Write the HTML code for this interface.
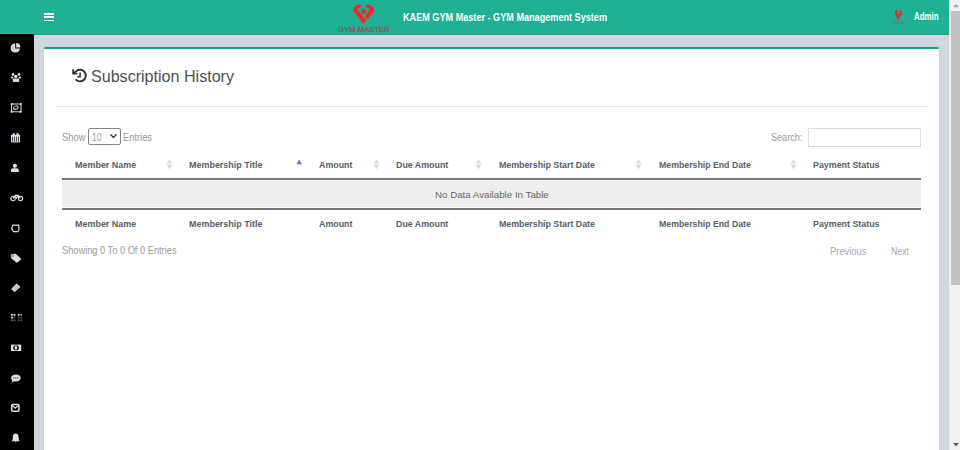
<!DOCTYPE html>
<html><head><meta charset="utf-8"><title>Subscription History</title>
<style>
html,body{margin:0;padding:0;}
body{width:960px;height:450px;overflow:hidden;position:relative;background:#d2d6de;font-family:"Liberation Sans",sans-serif;}
.ab{position:absolute;display:block}
.ic{position:absolute;display:block}
.t{position:absolute;white-space:nowrap;line-height:normal;transform-origin:0 0;font-family:"Liberation Sans",sans-serif}
#hdr{position:absolute;left:0;top:0;width:949px;height:34px;background:#1fb096}
#side{position:absolute;left:0;top:34px;width:34px;height:416px;background:#000}
#card{position:absolute;left:44px;top:47.4px;width:895px;height:420px;background:#fff;border-top:2.4px solid #0ca688;border-radius:2px;box-shadow:0 0 1.5px rgba(0,0,30,.18)}
#sb{position:absolute;left:949px;top:0;width:11px;height:450px;background:#f1f1f1;border-left:1px solid #e8e8e8;box-sizing:border-box}
#thumb{position:absolute;left:951px;top:11px;width:9px;height:274px;background:#c1c1c1}
</style></head><body>
<div id="hdr"></div>
<div id="side"></div>
<div class="ab" style="left:0;top:33px;width:34px;height:1px;background:#22c0a0"></div>
<div class="ab" style="left:34px;top:34px;width:915px;height:1px;background:#0ea688"></div>
<div id="card"></div>
<div id="sb"></div>
<div id="thumb"></div>
<svg class="ab" style="left:953px;top:4px" width="6" height="4" viewBox="0 0 6 4"><path d="M0 3.2 L3 0 L6 3.2Z" fill="#a3a3a3"/></svg>
<svg class="ab" style="left:953px;top:443px" width="6" height="4" viewBox="0 0 6 4"><path d="M0 0 L6 0 L3 3.2Z" fill="#505050"/></svg>
<!-- hamburger -->
<div class="ab" style="left:44px;top:13.3px;width:10px;height:1.7px;background:#fff"></div>
<div class="ab" style="left:44px;top:16.4px;width:10px;height:1.7px;background:#fff"></div>
<div class="ab" style="left:44px;top:19.5px;width:10px;height:1.7px;background:#fff"></div>
<svg class="ab" style="left:330px;top:0px" width="70" height="34" viewBox="0 0 70 34">
<path d="M29.6 4.4 C26 4.4 22.6 7.5 23.2 11.1 L33.3 23.9 L36.8 20.4 L27.6 10.2 Q27.6 8 29.6 7.8 Q31.8 7.6 31.6 5.8 Q31.2 4.4 29.6 4.4 Z" fill="#ef2a2a"/>
<path d="M37 4.4 C41 4.4 45 7.5 44.3 11.1 L37.6 19.6 L34.9 16.4 L39.4 9.6 Q39.4 7.6 37.2 7.5 Q35.4 7.3 35.5 5.9 Q35.8 4.4 37 4.4 Z" fill="#ef2a2a"/>
<circle cx="33.6" cy="11.6" r="2.6" fill="#ef2a2a"/>
<text x="8.2" y="31.8" font-family="Liberation Sans" font-size="7.8" font-weight="400" fill="#a24f5a" stroke="#a24f5a" stroke-width="0.35" textLength="51.6" lengthAdjust="spacingAndGlyphs">GYM MASTER</text>
</svg>
<svg class="ab" style="left:880px;top:0px" width="30" height="30" viewBox="0 0 30 30">
<g transform="translate(7.5 7.74) scale(0.324 0.513)"><path d="M29.6 4.4 C26 4.4 22.6 7.5 23.2 11.1 L33.3 23.9 L36.8 20.4 L27.6 10.2 Q27.6 8 29.6 7.8 Q31.8 7.6 31.6 5.8 Q31.2 4.4 29.6 4.4 Z" fill="#ef2222"/><path d="M37 4.4 C41 4.4 45 7.5 44.3 11.1 L37.6 19.6 L34.9 16.4 L39.4 9.6 Q39.4 7.6 37.2 7.5 Q35.4 7.3 35.5 5.9 Q35.8 4.4 37 4.4 Z" fill="#ef2222"/><circle cx="33.6" cy="11.6" r="2.6" fill="#ef2222"/></g>
<text x="11.4" y="23.6" font-family="Liberation Sans" font-size="2.6" fill="#b84a55" opacity="0.8" textLength="13.6" lengthAdjust="spacingAndGlyphs">GYM MASTER</text>
</svg>
<svg class="ic" style="left:8px;top:40px" width="16" height="16" viewBox="0 0 16 16"><path d="M7.2 3.4 A4.6 4.6 0 1 0 11.9 8.6 L7.2 8.6 Z" fill="#d9e2e9"/><path d="M8.2 3 A4.4 4.4 0 0 1 12.4 7.4 L8.2 7.4 Z" fill="#d9e2e9"/><path d="M5 6 Q4.4 8.6 6.6 10.6" fill="none" stroke="#8a96a0" stroke-width="0.7"/></svg>
<svg class="ic" style="left:8px;top:70px" width="16" height="16" viewBox="0 0 16 16"><circle cx="5" cy="4.4" r="1.4" fill="#d9e2e9"/><circle cx="11" cy="4.4" r="1.4" fill="#d9e2e9"/><circle cx="7.8" cy="6.4" r="1.7" fill="#d9e2e9"/><rect x="3" y="6.4" width="2.4" height="2.2" rx="0.8" fill="#d9e2e9"/><rect x="10.6" y="6.4" width="2.4" height="2.2" rx="0.8" fill="#d9e2e9"/><rect x="4.8" y="8.5" width="6.4" height="3.6" rx="1" fill="#d9e2e9"/></svg>
<svg class="ic" style="left:8px;top:100px" width="16" height="16" viewBox="0 0 16 16"><rect x="3.6" y="4" width="9.4" height="7.8" fill="none" stroke="#d9e2e9" stroke-width="1"/><circle cx="3.7" cy="4.1" r="1.1" fill="#d9e2e9"/><circle cx="12.8" cy="4" r="1.1" fill="#d9e2e9"/><circle cx="3.6" cy="11.7" r="1.1" fill="#d9e2e9"/><circle cx="12.5" cy="11.8" r="1.1" fill="#d9e2e9"/><ellipse cx="7.8" cy="7.8" rx="3" ry="2.2" fill="#d9e2e9" opacity="0.8" transform="rotate(-25 7.8 7.8)"/><ellipse cx="7.6" cy="7.5" rx="1.8" ry="0.9" fill="#000"/></svg>
<svg class="ic" style="left:8px;top:130px" width="16" height="16" viewBox="0 0 16 16"><rect x="3" y="4.8" width="9.1" height="7.6" fill="#d9e2e9"/><rect x="4.6" y="3.2" width="2.2" height="2.2" fill="#d9e2e9"/><rect x="8.4" y="3.2" width="2.2" height="2.2" fill="#d9e2e9"/><rect x="4.0" y="6.6" width="0.9" height="5" fill="#3a3050"/><rect x="6.0" y="6.6" width="0.9" height="5" fill="#303a50"/><rect x="8.0" y="6.6" width="0.9" height="5" fill="#304a30"/><rect x="10.0" y="6.6" width="0.9" height="5" fill="#403050"/></svg>
<svg class="ic" style="left:8px;top:160px" width="16" height="16" viewBox="0 0 16 16"><circle cx="6.9" cy="5.8" r="2.1" fill="#d9e2e9"/><path d="M3 12 L3 10 Q3 8.2 5 8.2 L8.8 8.2 Q10.8 8.2 10.8 10 L10.8 12 Z" fill="#d9e2e9"/></svg>
<svg class="ic" style="left:8px;top:190px" width="16" height="16" viewBox="0 0 16 16"><circle cx="5.1" cy="8.5" r="2.2" fill="none" stroke="#d9e2e9" stroke-width="1.1"/><circle cx="12.5" cy="8.5" r="2.2" fill="none" stroke="#d9e2e9" stroke-width="1.1"/><path d="M5.1 8.5 L7.2 5.4 L10.4 5.2 L12.5 8.5 M7.2 5.4 L8.4 8.2 L10.4 5.2" fill="none" stroke="#d9e2e9" stroke-width="1.1"/></svg>
<svg class="ic" style="left:8px;top:220px" width="16" height="16" viewBox="0 0 16 16"><path d="M5 5 L10.8 5.2 L11 10 L9.8 11.6 L5.6 11.6 L3.6 8.6 Z" fill="none" stroke="#d9e2e9" stroke-width="1.2" stroke-linejoin="round"/></svg>
<svg class="ic" style="left:8px;top:250px" width="16" height="16" viewBox="0 0 16 16"><path d="M3.2 4.6 L7.6 4.0 L13 9 L9 12.6 L3.4 8.2 Z" fill="#d9e2e9" stroke="#d9e2e9" stroke-width="0.6" stroke-linejoin="round"/><circle cx="5" cy="5.9" r="0.75" fill="#334"/></svg>
<svg class="ic" style="left:8px;top:280px" width="16" height="16" viewBox="0 0 16 16"><path d="M3.2 8.9 L8.5 3.4 L12.3 6.9 L6.6 12.1 Z" fill="#d9e2e9"/><path d="M5.6 8.9 L8.5 5.9 L9.8 7.1 L6.8 10 Z" fill="none" stroke="#556" stroke-width="0.5" opacity="0.8"/></svg>
<svg class="ic" style="left:8px;top:310px" width="16" height="16" viewBox="0 0 16 16"><rect x="3" y="4" width="1.8" height="1.8" fill="#d9e2e9"/><rect x="5.6" y="4" width="1.8" height="1.8" fill="#d9e2e9"/><rect x="3" y="6.7" width="1.8" height="1.8" fill="#d9e2e9"/><rect x="5.6" y="6.7" width="1.8" height="1.8" fill="#d9e2e9" opacity=".4"/><rect x="3" y="9.4" width="1.8" height="1.8" fill="#d9e2e9" opacity=".4"/><rect x="5.6" y="9.4" width="1.8" height="1.8" fill="#d9e2e9" opacity=".4"/><rect x="9.8" y="4" width="1.8" height="1.8" fill="#d9e2e9"/><rect x="12.4" y="4" width="1.8" height="1.8" fill="#d9e2e9" opacity=".6"/><rect x="9.8" y="6.7" width="1.8" height="1.8" fill="#d9e2e9" opacity=".35"/><rect x="12.4" y="6.7" width="1.8" height="1.8" fill="#d9e2e9" opacity=".35"/><rect x="9.8" y="9.4" width="1.8" height="1.8" fill="#d9e2e9" opacity=".35"/><rect x="12.4" y="9.4" width="1.8" height="1.8" fill="#d9e2e9" opacity=".35"/></svg>
<svg class="ic" style="left:8px;top:340px" width="16" height="16" viewBox="0 0 16 16"><rect x="3" y="4.6" width="10.2" height="6.4" fill="#d9e2e9"/><ellipse cx="8" cy="7.8" rx="2.8" ry="2.5" fill="#000"/><ellipse cx="7.9" cy="7.8" rx="1.3" ry="2" fill="#d9e2e9"/></svg>
<svg class="ic" style="left:8px;top:370px" width="16" height="16" viewBox="0 0 16 16"><ellipse cx="7.9" cy="8" rx="4.8" ry="3.4" fill="#d9e2e9"/><path d="M4.4 10 L3.6 12.6 L7 11" fill="#d9e2e9"/><circle cx="5.8" cy="8" r="0.65" fill="#333"/><circle cx="7.9" cy="8" r="0.65" fill="#333"/><circle cx="10" cy="8" r="0.65" fill="#333"/></svg>
<svg class="ic" style="left:8px;top:400px" width="16" height="16" viewBox="0 0 16 16"><rect x="3.7" y="4.5" width="7.2" height="6.7" rx="1.2" fill="none" stroke="#d9e2e9" stroke-width="1.6"/><path d="M4.8 5.8 L7.3 8.2 L9.8 5.8" fill="none" stroke="#d9e2e9" stroke-width="1.2"/></svg>
<svg class="ic" style="left:8px;top:430px" width="16" height="16" viewBox="0 0 16 16"><path d="M7.6 3.6 Q10.6 3.8 10.6 7.4 L10.8 10 L12 11.2 L3.4 11.2 L4.6 10 L4.8 7.4 Q4.8 3.8 7.6 3.6 Z" fill="#d9e2e9"/><path d="M6.6 11.6 L8.8 11.6 L7.7 12.6 Z" fill="#d9e2e9"/></svg>
<!-- title icon (history) -->
<svg class="ab" style="left:68px;top:64px" width="24" height="24" viewBox="0 0 24 24">
<path d="M8.4 7.0 A5.8 5.8 0 1 1 7.6 15.4" fill="none" stroke="#2e2e2e" stroke-width="1.9"/>
<path d="M5.2 5.2 L5.2 9.6 L9.4 9.6" fill="none" stroke="#2e2e2e" stroke-width="1.9"/>
<path d="M5.6 9.2 L8.8 6.8" fill="none" stroke="#2e2e2e" stroke-width="1.6"/>
<path d="M12.1 8.6 V12.7 H9.2" fill="none" stroke="#2e2e2e" stroke-width="1.6"/>
</svg>
<!-- divider -->
<div class="ab" style="left:56px;top:106px;width:872px;height:1px;background:#e6e6e6"></div>
<!-- select -->
<div class="ab" style="left:88px;top:128px;width:32.5px;height:16.6px;box-sizing:border-box;border:1px solid #858585;border-radius:2px;background:#fff"></div>
<svg class="ab" style="left:109px;top:133px" width="9" height="6" viewBox="0 0 9 6"><path d="M1.4 1.4 L4.5 4.4 L7.6 1.4" fill="none" stroke="#222" stroke-width="1.3"/></svg>
<!-- search input -->
<div class="ab" style="left:808px;top:128.3px;width:113px;height:18.3px;box-sizing:border-box;border:1.3px solid #dddddd;background:#fff"></div>
<!-- table -->
<div class="ab" style="left:62px;top:178px;width:859px;height:2px;background:#787878"></div>
<div class="ab" style="left:62px;top:181px;width:859px;height:26px;background:#eeeeee"></div>
<div class="ab" style="left:62px;top:208px;width:859px;height:2px;background:#787878"></div>
<!-- sort icons -->
<svg class="ab" style="left:165.9px;top:158.5px" width="7" height="11" viewBox="0 0 7 11"><path d="M0.6 4.6 L3.5 0.4 L6.4 4.6Z M0.6 5.8 L6.4 5.8 L3.5 10.2Z" fill="#d9d9d9"/></svg>
<svg class="ab" style="left:296px;top:158.5px" width="7" height="6" viewBox="0 0 7 6"><path d="M0.4 5.2 L3.2 0.4 L6 5.2Z" fill="#6f6fdc"/></svg>
<svg class="ab" style="left:372.6px;top:158.5px" width="7" height="11" viewBox="0 0 7 11"><path d="M0.6 4.6 L3.5 0.4 L6.4 4.6Z M0.6 5.8 L6.4 5.8 L3.5 10.2Z" fill="#d9d9d9"/></svg>
<svg class="ab" style="left:474.6px;top:158.5px" width="7" height="11" viewBox="0 0 7 11"><path d="M0.6 4.6 L3.5 0.4 L6.4 4.6Z M0.6 5.8 L6.4 5.8 L3.5 10.2Z" fill="#d9d9d9"/></svg>
<svg class="ab" style="left:635.0px;top:158.5px" width="7" height="11" viewBox="0 0 7 11"><path d="M0.6 4.6 L3.5 0.4 L6.4 4.6Z M0.6 5.8 L6.4 5.8 L3.5 10.2Z" fill="#d9d9d9"/></svg>
<svg class="ab" style="left:790.4px;top:158.5px" width="7" height="11" viewBox="0 0 7 11"><path d="M0.6 4.6 L3.5 0.4 L6.4 4.6Z M0.6 5.8 L6.4 5.8 L3.5 10.2Z" fill="#d9d9d9"/></svg>
<div class="t" style="left:403.00px;top:11.95px;font-size:10.0px;font-weight:700;color:#ffffff;transform:scaleX(0.9110)">KAEM GYM Master - GYM Management System</div>
<div class="t" style="left:914.20px;top:10.77px;font-size:10.2px;font-weight:700;color:#ffffff;transform:scaleX(0.7759)">Admin</div>
<div class="t" style="left:91.00px;top:66.98px;font-size:16.6px;font-weight:400;color:#4f4f4f;transform:scaleX(0.9691)">Subscription History</div>
<div class="t" style="left:62.25px;top:131.77px;font-size:10.2px;font-weight:400;color:#999999;transform:scaleX(0.9182)">Show</div>
<div class="t" style="left:123.00px;top:131.77px;font-size:10.2px;font-weight:400;color:#999999;transform:scaleX(0.9143)">Entries</div>
<div class="t" style="left:92.10px;top:131.95px;font-size:10px;font-weight:400;color:#a0a0a0;transform:scaleX(0.8539)">10</div>
<div class="t" style="left:771.25px;top:131.77px;font-size:10.2px;font-weight:400;color:#999999;transform:scaleX(0.8901)">Search:</div>
<div class="t" style="left:434.80px;top:189.04px;font-size:9.9px;font-weight:400;color:#666666;transform:scaleX(0.9854)">No Data Available In Table</div>
<div class="t" style="left:62.30px;top:244.77px;font-size:10.2px;font-weight:400;color:#999999;transform:scaleX(0.9081)">Showing 0 To 0 Of 0 Entries</div>
<div class="t" style="left:830.40px;top:245.77px;font-size:10.2px;font-weight:400;color:#a8a8a8;transform:scaleX(0.9208)">Previous</div>
<div class="t" style="left:891.40px;top:245.77px;font-size:10.2px;font-weight:400;color:#a8a8a8;transform:scaleX(0.8591)">Next</div>
<div class="t" style="left:75.00px;top:159.13px;font-size:9.8px;font-weight:700;color:#56606b;transform:scaleX(0.9144)">Member Name</div>
<div class="t" style="left:75.00px;top:218.13px;font-size:9.8px;font-weight:700;color:#56606b;transform:scaleX(0.9144)">Member Name</div>
<div class="t" style="left:189.20px;top:159.13px;font-size:9.8px;font-weight:700;color:#56606b;transform:scaleX(0.9143)">Membership Title</div>
<div class="t" style="left:189.20px;top:218.13px;font-size:9.8px;font-weight:700;color:#56606b;transform:scaleX(0.9143)">Membership Title</div>
<div class="t" style="left:318.50px;top:159.13px;font-size:9.8px;font-weight:700;color:#56606b;transform:scaleX(0.9050)">Amount</div>
<div class="t" style="left:318.50px;top:218.13px;font-size:9.8px;font-weight:700;color:#56606b;transform:scaleX(0.9050)">Amount</div>
<div class="t" style="left:396.20px;top:159.13px;font-size:9.8px;font-weight:700;color:#56606b;transform:scaleX(0.9037)">Due Amount</div>
<div class="t" style="left:396.20px;top:218.13px;font-size:9.8px;font-weight:700;color:#56606b;transform:scaleX(0.9037)">Due Amount</div>
<div class="t" style="left:498.80px;top:159.13px;font-size:9.8px;font-weight:700;color:#56606b;transform:scaleX(0.8986)">Membership Start Date</div>
<div class="t" style="left:498.80px;top:218.13px;font-size:9.8px;font-weight:700;color:#56606b;transform:scaleX(0.8986)">Membership Start Date</div>
<div class="t" style="left:658.75px;top:159.13px;font-size:9.8px;font-weight:700;color:#56606b;transform:scaleX(0.8927)">Membership End Date</div>
<div class="t" style="left:658.75px;top:218.13px;font-size:9.8px;font-weight:700;color:#56606b;transform:scaleX(0.8927)">Membership End Date</div>
<div class="t" style="left:813.30px;top:159.13px;font-size:9.8px;font-weight:700;color:#56606b;transform:scaleX(0.9046)">Payment Status</div>
<div class="t" style="left:813.30px;top:218.13px;font-size:9.8px;font-weight:700;color:#56606b;transform:scaleX(0.9046)">Payment Status</div>
</body></html>
